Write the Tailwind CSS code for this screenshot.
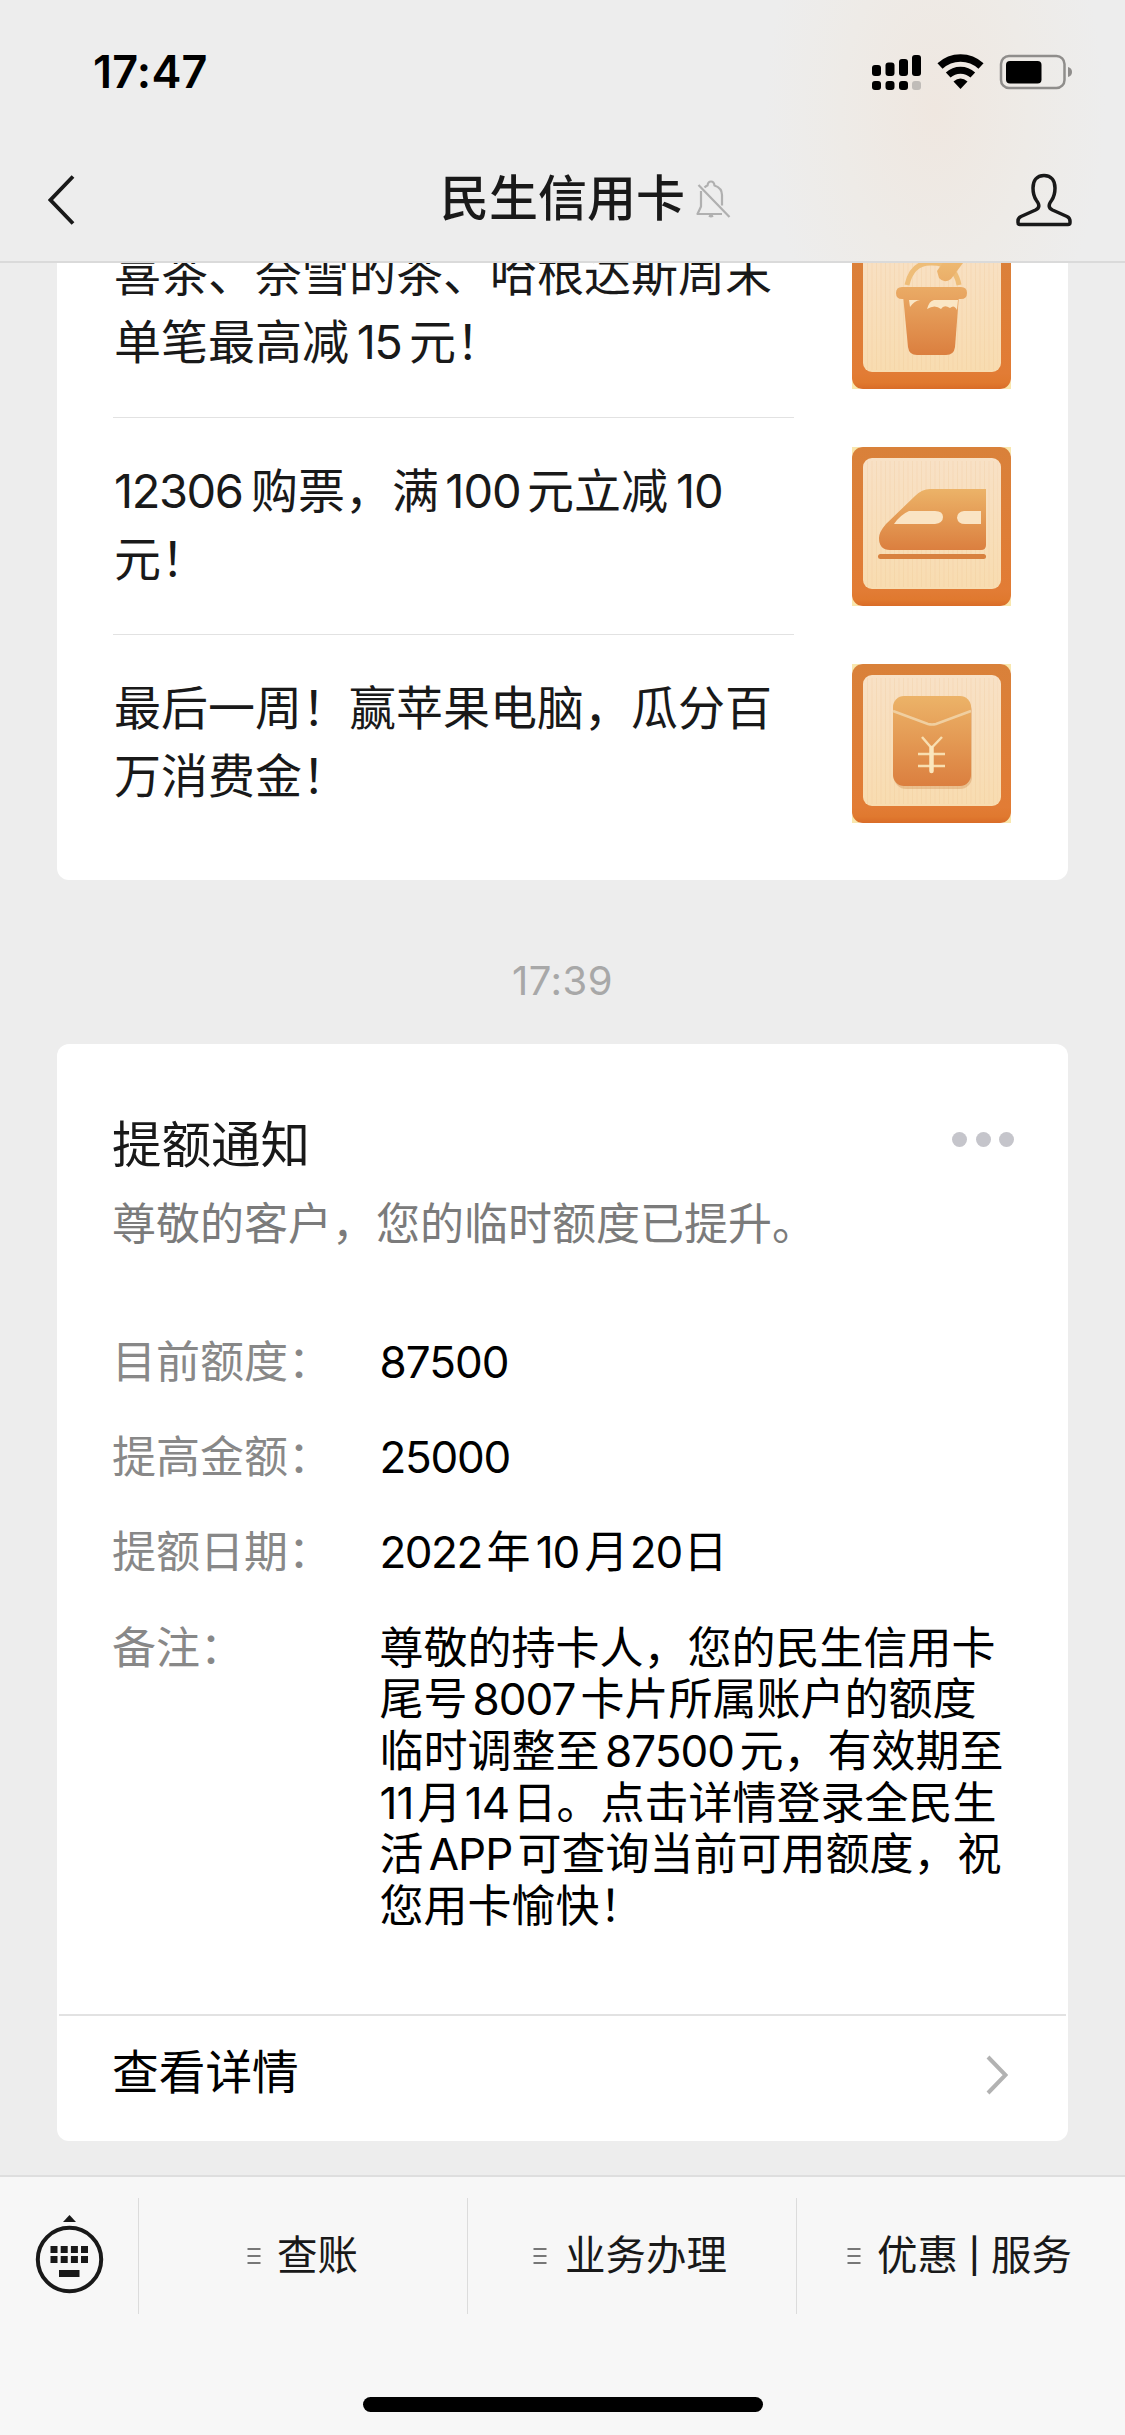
<!DOCTYPE html>
<html lang="zh-CN">
<head>
<meta charset="utf-8">
<title>民生信用卡</title>
<script src="https://cdn.jsdelivr.net/npm/@tailwindcss/browser@4"></script>
</head>
<body class="w-[1125px] h-[2435px] overflow-hidden flex flex-col bg-[#ededed] text-[#191919] font-[Inter,'Noto_Sans_CJK_SC',sans-serif] whitespace-nowrap">

<svg class="absolute size-0" aria-hidden="true">
  <defs>
    <linearGradient id="frame" x1="0" y1="0" x2="0" y2="1"><stop offset="0" stop-color="#d9813a"/><stop offset=".9" stop-color="#e27c35"/><stop offset=".96" stop-color="#e0792f"/><stop offset="1" stop-color="#d96c28"/></linearGradient>
    <linearGradient id="panel" x1="0" y1="0" x2="0" y2="1"><stop offset="0" stop-color="#f8e1c6"/><stop offset="1" stop-color="#f8dcb0"/></linearGradient>
    <linearGradient id="glyph" x1="0" y1="0" x2="0" y2="1"><stop offset="0" stop-color="#ecb368"/><stop offset="1" stop-color="#db7f3f"/></linearGradient>
    <linearGradient id="cup" gradientUnits="userSpaceOnUse" x1="0" y1="20" x2="0" y2="125"><stop offset="0" stop-color="#efc078"/><stop offset=".4" stop-color="#e9a863"/><stop offset="1" stop-color="#db7f3f"/></linearGradient>
    <pattern id="grain" width="9" height="140" patternUnits="userSpaceOnUse"><path d="M2 0V140M6.5 0V140" stroke="#e9bd87" stroke-opacity=".2" stroke-width="1"/></pattern>
    <g id="tile">
      <path d="M0 0h8L0 8ZM159 0v8l-8-8ZM0 159v-8l8 8ZM159 159h-8l8-8Z" fill="#f9e7ae"/>
      <rect width="159" height="159" rx="11" fill="url(#frame)"/>
      <rect x="11" y="11" width="138" height="131" rx="9" fill="url(#panel)"/>
      <rect x="14" y="14" width="132" height="126" fill="url(#grain)"/>
    </g>
  </defs>
</svg>

<header class="h-[263px] shrink-0 flex flex-col border-b-2 border-[#dadada] bg-[radial-gradient(ellipse_170px_280px_at_935px_110px,#efe7e0,#eeebe7_55%,transparent)] bg-[#ededed]">
  <div class="h-[144px] pl-[93px] pr-[52px] flex items-center justify-between">
    <span class="text-[45px] leading-[45px] font-semibold text-black tracking-[0.200px] -mt-px">17:47</span>
    <svg class="w-[201px] h-9 -mt-px" viewBox="872 53 201 36">
      <rect x="872" y="64" width="9" height="11" rx="3"/><rect x="885.5" y="61.5" width="9" height="13.500" rx="3"/><rect x="899" y="58" width="9" height="17" rx="3"/><rect x="912" y="54" width="9" height="21" rx="3"/>
      <rect x="872" y="80" width="9" height="9" rx="3"/><rect x="885.5" y="80" width="9" height="9" rx="3"/><rect x="899" y="80" width="9" height="9" rx="3"/><rect x="912" y="80" width="9" height="9" rx="3" fill="#c0bcb8"/>
      <path d="M940 65A30 30 0 0 1 981 65" fill="none" stroke="#000" stroke-width="7.500"/>
      <path d="M948.200 74A18.500 18.500 0 0 1 972.800 74" fill="none" stroke="#000" stroke-width="7"/>
      <path d="M953.500 80.500Q960.500 74.500 967.500 80.500L960.500 88Z"/>
      <rect x="1001" y="55" width="63.500" height="32" rx="8" fill="none" stroke="#8f8d8b" stroke-width="2.500"/>
      <rect x="1006" y="60" width="35.500" height="22.500" rx="4"/>
      <path d="M1068 66Q1072 67 1072 71T1068 76Z" fill="#8f8d8b"/>
    </svg>
  </div>
  <div class="h-[111px] pl-[48px] pr-[53px] flex items-center">
    <svg class="w-7 h-[50px]" viewBox="0 0 28 50" fill="none" stroke="#191919" stroke-width="3.800"><path d="M25 1.500L2.500 25L25 48.500"/></svg>
    <h1 class="ml-[364px] -mt-[2px] text-[49px] leading-[60px] font-medium">民生信用卡</h1>
    <svg class="ml-[10px] -mt-[2px] w-9 h-[38px]" viewBox="0 0 36 38" fill="none" stroke="#b0b0b0" stroke-width="2.200" stroke-linejoin="round">
      <path d="M27 34H2.500L6 26.500V11M9.500 7.500Q11 6 12.500 5.500Q13 1.500 16 1.500T19.500 5.500Q27 8 27 15V25.500M14 35.500Q16 37 18 35.500M3.500 5L34.500 37"/>
    </svg>
    <svg class="ml-auto w-14 h-[54px]" viewBox="0 0 56 54" fill="none" stroke="#191919" stroke-width="3.500" stroke-linejoin="round">
      <path d="M28 2.500C20.500 2.500 17 8 17 15C17 20 18 24 20.500 27.500C24 32 23.500 35 19.500 37L5 43.500Q2 45 2 48V49.500Q2 51.500 4 51.500H52Q54 51.500 54 49.500V48Q54 45 51 43.500L36.500 37C32.500 35 32 32 35.500 27.500C38 24 39 20 39 15C39 8 35.500 2.500 28 2.500Z"/>
    </svg>
  </div>
</header>

<main class="h-[1912px] shrink-0 overflow-hidden px-[57px]">
  <section class="-mt-[62px] h-[679px] w-[1011px] rounded-xl bg-white pl-14 pr-[57px] text-[47px] leading-[67.500px]">
    <div class="h-[217px] flex items-center justify-between">
      <p class="w-[681px] h-full flex flex-col justify-center border-b border-[#e2e2e2] pl-px pb-[3px]">
        <span>喜茶、奈雪的茶、哈根达斯周末</span>
        <span>单笔最高减<span class="inline-block w-[60px] text-center tracking-[-1.500px]">15</span>元！</span>
      </p>
      <svg class="size-[159px]" viewBox="0 0 159 159">
        <use href="#tile"/>
        <g fill="url(#cup)">
          <path d="M55 55Q60 32 80 33Q103 33 107 55" fill="none" stroke="#eebd78" stroke-width="5"/>
          <path d="M85 41L92 31L107 30L111 33L99 49Q92 54 87 48Z"/>
          <path d="M50 57H109Q115 57 115 63T109 69H50Q44 69 44 63T50 57Z"/>
          <path d="M51 65H107L103 117Q102 125 94 125H65Q57 125 56 117Z"/>
        </g>
        <path d="M75 79Q77 71 82 70H106L105 80Q102 74 98 78Q92 74 89 79Q83 74 75 79ZM57 70H68Q62 71 58 77Z" fill="#fae6c4"/>
      </svg>
    </div>
    <div class="h-[217px] flex items-center justify-between">
      <p class="w-[681px] h-full flex flex-col justify-center border-b border-[#e2e2e2] pl-px pb-[3px]">
        <span><span class="inline-block w-[137px] tracking-[-1.400px]">12306</span>购票，满<span class="inline-block w-[88px] text-center tracking-[-1px]">100</span>元立减<span class="ml-2 tracking-[-1px]">10</span></span>
        <span>元！</span>
      </p>
      <svg class="size-[159px]" viewBox="0 0 159 159">
        <use href="#tile"/>
        <path fill="url(#glyph)" d="M78 42H134V98Q134 103 129 103H38Q27 103 27 91Q27 85 34 77L63 49Q70 42 78 42Z"/>
        <path fill="#fae4c4" d="M57 64Q48 68 42 77H83Q91 76 91 70T83 64ZM112 64Q105 65 105 71Q106 77 113 77H129V64Z"/>
        <rect x="26" y="107" width="108" height="5" rx="2.500" fill="#d8813f"/>
      </svg>
    </div>
    <div class="h-[217px] flex items-center justify-between">
      <p class="w-[681px] h-full flex flex-col justify-center pl-px pb-[4px]">
        <span>最后一周！赢苹果电脑，瓜分百</span>
        <span>万消费金！</span>
      </p>
      <svg class="size-[159px]" viewBox="0 0 159 159">
        <use href="#tile"/>
        <rect x="42" y="35" width="78" height="90" rx="12" fill="#cf8a4a" fill-opacity=".35"/>
        <rect x="41" y="32" width="78" height="90" rx="11" fill="url(#glyph)"/>
        <path d="M41 47L76 60Q80 61 84 60L119 47" fill="none" stroke="#f0cfa0" stroke-width="2.500"/>
        <path d="M70 73L79.500 84L90 73M66 90H93M66 102H93" fill="none" stroke="#f8deb0" stroke-width="2.500"/><path d="M79.500 84V107" stroke="#fae6bd" stroke-width="4.500" stroke-linecap="round"/>
      </svg>
    </div>
  </section>

  <div class="h-[164px] flex items-center justify-center text-[40px] leading-[40px] text-[#a8a8a8] tracking-[0.500px] pt-[38px]">17:39</div>

  <section class="h-[1097px] w-[1011px] rounded-xl bg-white flex flex-col">
    <div class="h-[970px] pt-[71px] px-[55px] text-[44px] leading-[51.600px]">
      <div class="h-[60px] flex items-center justify-between">
        <h2 class="text-[49.500px] leading-[60px] font-normal">提额通知</h2>
        <div class="flex gap-[8.500px] -mt-[12px] -mr-px">
          <i class="size-[15px] rounded-full bg-[#c5c5cb]"></i><i class="size-[15px] rounded-full bg-[#c5c5cb]"></i><i class="size-[15px] rounded-full bg-[#c5c5cb]"></i>
        </div>
      </div>
      <p class="mt-[24px] text-[#7b7b7b]">尊敬的客户，您的临时额度已提升。</p>
      <dl class="mt-[86px] grid grid-cols-[267.500px_1fr] gap-y-[43.800px] text-black">
        <dt class="text-[#888]">目前额度：</dt><dd class="tracking-[-1px]">87500</dd>
        <dt class="text-[#888]">提高金额：</dt><dd class="tracking-[-1.300px]">25000</dd>
        <dt class="text-[#888]">提额日期：</dt><dd><span class="inline-block w-[107px] tracking-[-1.500px]">2022</span>年<span class="inline-block w-[54px] text-center tracking-[-1px]">10</span>月<span class="inline-block w-[55px] text-center tracking-[-1px]">20</span>日</dd>
        <dt class="text-[#888]">备注：</dt>
        <dd>
          尊敬的持卡人，您的民生信用卡<br>
          尾号<span class="inline-block w-[113px] text-center tracking-[-1px]">8007</span>卡片所属账户的额度<br>
          临时调整至<span class="inline-block w-[140px] text-center tracking-[-1px]">87500</span>元，有效期至<br>
          <span class="inline-block w-[38px] tracking-[-1px]">11</span>月<span class="inline-block w-[51px] text-center tracking-[-1px]">14</span>日。点击详情登录全民生<br>
          活<span class="inline-block w-[94px] text-center tracking-[-1px]">APP</span>可查询当前可用额度，祝<br>
          您用卡愉快！
        </dd>
      </dl>
    </div>
    <div class="mx-[2px] flex-1 border-t-2 border-[#e2e2e2] pl-[53px] pr-[58px] pb-[13px] flex items-center justify-between text-[46.700px] leading-[60px] text-black">
      <span>查看详情</span>
      <svg class="w-[22px] h-10 mt-[6px]" viewBox="0 0 22 40" fill="none" stroke="#b2b2b2" stroke-width="4"><path d="M2 2L19.500 20L2 38"/></svg>
    </div>
  </section>
</main>

<footer class="h-[260px] flex flex-col bg-[#f7f7f7] border-t-2 border-[#dedede] text-[40.500px] leading-[60px]">
  <nav class="h-[159px] pt-[21px] pb-[22px] flex">
    <div class="w-[138px] pl-[35px] pt-[17px]">
      <svg class="w-[69px] h-[80px]" viewBox="0 0 69 80" fill="#191919">
        <path d="M34.500 0L41 7H28Z"/>
        <circle cx="34.500" cy="44.500" r="31.700" fill="none" stroke="#191919" stroke-width="4"/>
        <path d="M15.500 31h7v7h-7zM25.700 31h7v7h-7zM35.900 31h7v7h-7zM46 31h7v7h-7zM15.500 41h7v7h-7zM25.700 41h7v7h-7zM35.900 41h7v7h-7zM46 41h7v7h-7zM24 55h20.500v7h-20.500z"/>
      </svg>
    </div>
    <div class="w-[329px] border-l border-[#dcdcdc] pl-[108px] flex items-center">
      <svg class="w-[14px] h-[18px]" viewBox="0 0 14 18" stroke="#777" stroke-width="2"><path d="M.5 2H13.500M.5 9H13.500M.5 16H13.500"/></svg>
      <span class="ml-[16px]">查账</span>
    </div>
    <div class="w-[329px] border-l border-[#dcdcdc] pl-[65px] flex items-center">
      <svg class="w-[14px] h-[18px]" viewBox="0 0 14 18" stroke="#777" stroke-width="2"><path d="M.5 2H13.500M.5 9H13.500M.5 16H13.500"/></svg>
      <span class="ml-[18px]">业务办理</span>
    </div>
    <div class="flex-1 border-l border-[#dcdcdc] pl-[50px] flex items-center">
      <svg class="w-[14px] h-[18px]" viewBox="0 0 14 18" stroke="#777" stroke-width="2"><path d="M.5 2H13.500M.5 9H13.500M.5 16H13.500"/></svg>
      <span class="ml-4 flex items-center">优惠<span class="w-[33px] text-center text-[34px] font-medium">|</span>服务</span>
    </div>
  </nav>
  <div class="mt-[61px] w-[400px] h-[15px] rounded-full bg-black self-center"></div>
</footer>
</body>
</html>
